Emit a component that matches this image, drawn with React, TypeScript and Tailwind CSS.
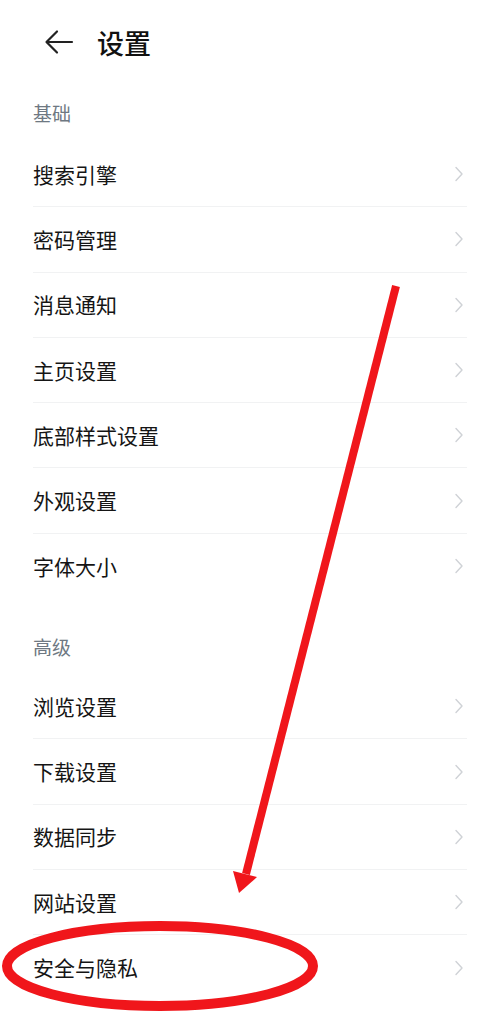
import React from "react";

const font = { fontFamily: '"Noto Sans CJK SC", "Noto Sans", sans-serif' };

function Chevron() {
  return (
    <svg width="10" height="16" viewBox="0 0 10 16" fill="none">
      <path d="M2 1.5 L8 8 L2 14.5" stroke="#cfd2d6" strokeWidth="1.4" strokeLinecap="round" strokeLinejoin="round" />
    </svg>
  );
}

function Row({ label, last }: { label: string; last?: boolean }) {
  return (
    <div className={`flex h-[65.3px] items-center justify-between pr-[3px] ${last ? "" : "border-b border-[#f1f2f3]"}`}>
      <span className="text-[21px] leading-none text-[#151515]">{label}</span>
      <Chevron />
    </div>
  );
}

export default function App() {
  const basic = ["搜索引擎", "密码管理", "消息通知", "主页设置", "底部样式设置", "外观设置", "字体大小"];
  const adv = ["浏览设置", "下载设置", "数据同步", "网站设置", "安全与隐私"];
  return (
    <div className="relative h-[1012px] w-[500px] overflow-hidden bg-white" style={font}>
      <div className="flex h-[84px] items-center pl-[44px]">
        <svg width="30" height="26" viewBox="0 0 30 26" fill="none">
          <path d="M28 13 H3 M13 2.5 L2.5 13 L13 23.5" stroke="#222" strokeWidth="2.2" strokeLinecap="round" strokeLinejoin="round" />
        </svg>
        <span className="ml-[23px] text-[27px] font-medium leading-none text-[#111]">设置</span>
      </div>
      <div className="px-[33px]">
        <div className="flex h-[58px] items-center text-[19px] text-[#6e7882]">基础</div>
        {basic.map((l, i) => (
          <Row key={l} label={l} last={i === basic.length - 1} />
        ))}
        <div className="flex h-[75px] items-end pb-[18px] text-[19px] leading-none text-[#6e7882]">高级</div>
        {adv.map((l, i) => (
          <Row key={l} label={l} last={i === adv.length - 1} />
        ))}
      </div>
      <svg className="pointer-events-none absolute left-0 top-0" width="500" height="1012" viewBox="0 0 500 1012">
        <line x1="396" y1="286" x2="246" y2="874" stroke="#f0161b" strokeWidth="8" />
        <polygon points="233,871 257,877 239,893" fill="#f0161b" />
        <ellipse cx="160" cy="966" rx="153" ry="40" fill="none" stroke="#f0161b" strokeWidth="10" />
      </svg>
    </div>
  );
}
